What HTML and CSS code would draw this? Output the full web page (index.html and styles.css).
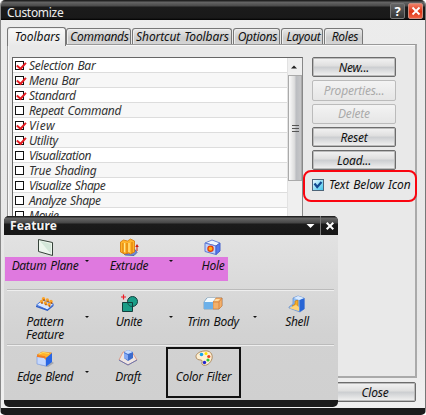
FILE: index.html
```html
<!DOCTYPE html>
<html lang="en">
<head>
<meta charset="utf-8">
<title>Customize</title>
<link rel="stylesheet" href="styles.css">
</head>
<body>
<div class="dialog">
  <header class="titlebar">
    <h1>Customize</h1>
    <span class="winbtn help">?</span>
    <span class="winbtn close"><svg width="10" height="10" viewBox="0 0 10 10"><path d="M1.500 1.500l7 7M8.500 1.500l-7 7" stroke="#fff" stroke-width="1.800"/></svg></span>
  </header>
  <nav class="tabs">
    <span class="tab active">Toolbars</span>
    <span class="tab commands">Commands</span>
    <span class="tab shortcut">Shortcut Toolbars</span>
    <span class="tab options">Options</span>
    <span class="tab layout">Layout</span>
    <span class="tab roles">Roles</span>
  </nav>
  <main class="panel">
    <div class="list">
      <ul>
        <li><i class="box on"></i>Selection Bar</li>
        <li><i class="box on"></i>Menu Bar</li>
        <li><i class="box on"></i>Standard</li>
        <li><i class="box"></i>Repeat Command</li>
        <li class="loose"><i class="box on"></i>View</li>
        <li><i class="box on"></i>Utility</li>
        <li class="tight"><i class="box"></i>Visualization</li>
        <li><i class="box"></i>True Shading</li>
        <li class="tight"><i class="box"></i>Visualize Shape</li>
        <li class="tight"><i class="box"></i>Analyze Shape</li>
        <li><i class="box"></i>Movie</li>
      </ul>
      <div class="scroll">
        <svg class="up" width="14" height="17" viewBox="0 0 14 17"><path d="M3 10.500l3-3l3 3z" fill="#222"/></svg>
        <div class="thumb"><i></i><i></i><i></i></div>
      </div>
    </div>
    <div class="side">
      <button class="btn">New...</button>
      <button class="btn off">Properties...</button>
      <button class="btn off">Delete</button>
      <button class="btn">Reset</button>
      <button class="btn">Load...</button>
      <div class="option">
        <svg width="12" height="12" viewBox="0 0 12 12"><defs><linearGradient id="cb" x2="1" y2="1"><stop stop-color="#f4fbff"/><stop offset="1" stop-color="#36c4ee"/></linearGradient></defs><rect x=".5" y=".5" width="11" height="11" fill="url(#cb)" stroke="#4d6478"/><path d="M2.500 4.500l2.700 3.500l4.300-5" fill="none" stroke="#124a91" stroke-width="2.200"/></svg>
        <span>Text Below Icon</span>
      </div>
    </div>
  </main>
  <footer class="actions"><button class="btn">Close</button></footer>
</div>
<div class="highlight"></div>
<section class="feature">
  <header class="ftitle">
    <h2>Feature</h2>
    <svg class="menu" width="16" height="18" viewBox="0 0 16 18"><path d="M3.500 7h8l-4 4z" fill="#fff"/></svg>
    <span class="fclose"><svg width="10" height="10" viewBox="0 0 10 10"><path d="M1.700 1.700l6.600 6.600M8.300 1.700l-6.600 6.600" stroke="#fff" stroke-width="2"/></svg></span>
  </header>
  <div class="tools">
    <div class="row first">
      <div class="tool arrow">
        <svg width="20" height="20" viewBox="0 0 20 20"><path d="M3.500 2.500l14 3v13l-14-4z" fill="#edf6ed" stroke="#354239"/><path d="M5 4l11 3v10z" fill="#d4e7d9"/></svg>
        <span>Datum Plane</span>
      </div>
      <div class="tool arrow">
        <svg width="20" height="20" viewBox="0 0 20 20"><path d="M2 14l4 4 9 .5 3-3-2-3z" fill="#7188d2" stroke="#314c9b" stroke-width=".7"/><path d="M1.500 5l3-2 4 1 3-2 4 2v11l-4 2-2-1-4 1-4-2z" fill="#ffb32b" stroke="#d87800" stroke-width=".8"/><path d="M4 6v10M8 6v11M13 5v11" stroke="#d97700"/><path d="M5.500 6v9M10 6v9" stroke="#ffe58c" stroke-width="1.300"/><path d="M18 14V9" stroke="#cc1e12"/><path d="M16.200 10L18 7l1.800 3z" fill="#cc1e12"/></svg>
        <span>Extrude</span>
      </div>
      <div class="tool hole">
        <svg width="20" height="20" viewBox="0 0 20 20"><path d="M2 6l7-3 8 3-4 3z" fill="#edf5ff" stroke="#6b85d4"/><path d="M2 6l11 3v8.500l-11-3z" fill="#bed2fc" stroke="#6079d4"/><path d="M13 9l4-3v8l-4 3.500z" fill="#5479ee" stroke="#4561cc"/><circle cx="7.500" cy="11.800" r="2.600" fill="#ffae12" stroke="#e53b0c" stroke-width="1.300"/></svg>
        <span>Hole</span>
      </div>
      <div class="tool"></div>
    </div>
    <div class="row">
      <div class="tool arrow">
        <svg width="20" height="20" viewBox="0 0 20 20"><path d="M1.500 12l6-5 11 4-6 6z" fill="#d7e5ff" stroke="#4778dd"/><path d="M1 12.500l11.500 4 6-5v1.500l-6 5-11.500-4z" fill="#315fc7"/><g fill="#fba428"><circle cx="8.500" cy="5.700" r="1.700"/><circle cx="12.300" cy="7" r="1.700"/><circle cx="16" cy="8.500" r="1.700"/><circle cx="6.500" cy="8.500" r="1.700"/><circle cx="10.300" cy="10" r="1.700"/><circle cx="14" cy="11.500" r="1.700"/></g><g fill="#b95c0d"><circle cx="9" cy="7" r=".9"/><circle cx="13" cy="8.300" r=".9"/><circle cx="16.500" cy="10" r=".9"/><circle cx="7" cy="10" r=".9"/><circle cx="11" cy="11.400" r=".9"/><circle cx="14.500" cy="13" r=".9"/></g></svg>
        <span>Pattern</span>
        <span class="second">Feature</span>
      </div>
      <div class="tool arrow">
        <svg width="20" height="20" viewBox="0 0 20 20"><circle cx="13.500" cy="8.500" r="5" fill="#1a9d87" stroke="#123f3d"/><path d="M3.500 9.500h10v9h-10z" fill="#1a9d87" stroke="#123f3d"/><path d="M8.600 9.500a5 5 0 0 0 5 4" fill="none" stroke="#123f3d" stroke-width=".8"/><path d="M4.500 1.500v5M2 4h5" stroke="#ed1c24" stroke-width="1.200"/></svg>
        <span>Unite</span>
      </div>
      <div class="tool arrow">
        <svg width="20" height="20" viewBox="0 0 20 20"><path d="M1 9l3-4h15v8l-3 3H1z" fill="#a4d6f5" stroke="#5380a6" stroke-width=".6"/><path d="M10 9l3-4h6v8l-3 3h-6z" fill="#f2b06b" stroke="#d6813c" stroke-width=".7"/><path d="M1 9h9v7H1z" fill="#6cb0e9"/><path d="M1.500 9h8l3-4h-8z" fill="#f3fbff"/><path d="M10 9h6l3-4M16 9v7" fill="none" stroke="#d17a35" stroke-width=".7"/><path d="M11 8l2-2h4l-2 2z" fill="#ffdda4"/></svg>
        <span>Trim Body</span>
      </div>
      <div class="tool">
        <svg width="20" height="20" viewBox="0 0 20 20"><path d="M2 14l4-3V5l5-2 6 2v11l-4 3-11-4z" fill="#8ebdf3" stroke="#5d88ce" stroke-width=".7"/><path d="M12.500 7l5-2v11l-5 3z" fill="#2865d5"/><path d="M5 13l3-2V8l3-1v8z" fill="#f5ad25" stroke="#bc791f" stroke-width=".7"/><path d="M2 15l7-3 3 2v4z" fill="#ffd377"/><path d="M7 5l4-2 6 2-5 2z" fill="#d9eaff"/></svg>
        <span>Shell</span>
      </div>
    </div>
    <div class="row">
      <div class="tool arrow">
        <svg width="20" height="20" viewBox="0 0 20 20"><path d="M5 17l8 2 6-4-3-2z" fill="#a5a8b0"/><path d="M2 7l5-3 10 1-5 5z" fill="#ffb12e" stroke="#e08a35" stroke-width=".7"/><path d="M2 8l9 2v8l-9-2z" fill="#c5d8fd" stroke="#7c9ce0" stroke-width=".7"/><path d="M11 10l6-5v9l-6 4.500z" fill="#2866e5"/><path d="M2 7l7 1q2 0 2 4L9 10 2 9z" fill="#f47d20"/><path d="M4 6l4-1.500 6 1" fill="none" stroke="#ffe05e"/></svg>
        <span class="edge">Edge Blend</span>
      </div>
      <div class="tool draft">
        <svg width="20" height="20" viewBox="0 0 20 20"><path d="M1 12l4-8h9l5 8-9 5z" fill="#eee5e2" stroke="#df8a72" stroke-width=".8"/><path d="M1 12l9 5 9-5" fill="none" stroke="#5971b4" stroke-width=".9"/><path d="M6 4l4-2 5 2v6l-5 3-4-3z" fill="#3d6ccc"/><path d="M6 4l4 2 5-2-5-2z" fill="#c8dcff"/><path d="M6 5l4 2v5l-4-2z" fill="#86a9f4"/></svg>
        <span>Draft</span>
      </div>
      <div class="tool selected">
        <svg width="20" height="20" viewBox="0 0 20 20"><path d="M10 3c6-1 9 3 8 7.500s-6 8-9 6.500c-3-2 1-4-2-5-3 0-5-1-5-3.500 0-3 4-5 8-5.500z" fill="#fff0d2" stroke="#a98355" stroke-width=".9"/><circle cx="7.500" cy="6.500" r="1.800" fill="#16a5ed"/><circle cx="12" cy="5.500" r="1.500" fill="#ffe200"/><circle cx="14.800" cy="8.500" r="1.600" fill="#f14119"/><circle cx="14" cy="12" r="1.600" fill="#32c837"/><circle cx="10.500" cy="14.500" r="1.700" fill="#2025cf"/></svg>
        <span>Color Filter</span>
      </div>
      <div class="tool"></div>
    </div>
  </div>
</section>
</body>
</html>
```
FILE: styles.css
```css
* { box-sizing: border-box; }
body { margin: 0; width: 426px; height: 415px; overflow: hidden; background: #fff; font: italic 12px/15px "Noto Sans", sans-serif; letter-spacing: -.3px; word-spacing: 1px; color: #111; }
h1, h2, ul { margin: 0; padding: 0; }
svg { display: block; flex: none; }
.dialog { height: 415px; display: flex; flex-direction: column; background: linear-gradient(#ececec, #e6e6e6 80%, #f1f1f1); border-radius: 5px; overflow: hidden; border-left: 1px solid #888; border-right: 1px solid #777; border-bottom: 7px solid #1b1b1b; }
.titlebar { height: 20px; flex: none; display: flex; align-items: center; padding: 1px 3px 0 6px; background: linear-gradient(#222 0, #222 1px, #666 2px, #494949 6px, #1b1b1b 7px, #191919 18px, #000); margin: 0 -1px; }
h1 { flex: 1; font: 12px/19px "Noto Sans", sans-serif; color: #eee; padding: 4px 0 0 1px; letter-spacing: -.3px; }
.winbtn { width: 15px; height: 16px; border: 1px solid #777; border-radius: 2px; display: flex; align-items: center; justify-content: center; background: linear-gradient(#666, #343434); color: #fff; font: bold 13px/14px "Noto Sans", sans-serif; margin: 0 0 0 3px; }
.winbtn.close { background: linear-gradient(#f18068, #dd3516 55%, #ef6042); border-color: #ce8d80; }
.tabs { height: 25px; flex: none; display: flex; align-items: flex-end; padding-left: 6px; letter-spacing: -.3px; }
.tab { height: 17px; border: 1px solid #777; border-bottom-color: #888; border-radius: 3px 3px 0 0; background: linear-gradient(#e8e8e8, #ccc 60%, #d5d5d5); display: flex; align-items: center; justify-content: center; white-space: nowrap; box-shadow: inset 1px 1px #eee; margin-right: 1px; }
.tab.active { height: 19px; width: 59px; border-bottom: 0; background: linear-gradient(#fafafa, #e9e9e9); margin: 0 0 -1px; z-index: 1; padding: 0 0 1px 2px; letter-spacing: 0; }
.commands { width: 65px; padding-left: 2px; }
.shortcut { width: 100px; letter-spacing: -.1px; padding-left: 1px; }
.options { width: 47px; padding-left: 2px; }
.layout { width: 42px; padding-left: 3px; }
.roles { width: 39px; padding-left: 3px; }
.panel { height: 334px; margin: -1px 8px 0 6px; flex: none; border: 1px solid #999; border-right: 2px solid #aaa; border-bottom: 2px solid #aaa; padding: 12px 0 0 4px; display: flex; gap: 9px; box-shadow: inset 1px 1px #f8f8f8; background: #e9e9e9; }
.list { width: 291px; flex: none; height: 320px; border: 1px solid #666; border-right-color: #888; background: #fff; display: flex; overflow: hidden; }
ul { width: 274px; flex: none; list-style: none; }
li { height: 15px; padding-left: 2px; display: flex; align-items: center; gap: 5px; border-bottom: 1px solid #ddd; color: #333; }
li:nth-child(even) { background: #f7f7f7; }
.loose { letter-spacing: .5px; }
.tight { letter-spacing: -.45px; }
.box { width: 9px; height: 9px; flex: none; border: 1px solid #111; background: #fff; position: relative; }
.box.on::after { content: ""; position: absolute; left: .5px; top: 0; width: 6.500px; height: 4px; border: solid #e51b20; border-width: 0 0 2px 2px; transform: rotate(-48deg); }
.scroll { width: 15px; background: #efefef; display: flex; flex-direction: column; border-left: 1px solid #e2e2e2; }
.thumb { width: 14px; height: 106px; border: 1px solid #aaa; background: linear-gradient(90deg, #fafafa, #ddd 45%, #bbbdc1 60%, #c6c6c8); display: flex; flex-direction: column; gap: 2px; align-items: center; justify-content: center; }
.thumb i { height: 1px; width: 7px; background: #555; }
.side { width: 102px; display: flex; flex-direction: column; gap: 3px; }
.btn { width: 84px; height: 20.3px; flex: none; padding: 0; border: 1px solid #6c6c6c; border-radius: 2px; background: linear-gradient(#f3f3f3, #dedede 45%, #cbcdd0 50%, #eee 94%, #ddd); box-shadow: inset 0 0 0 1px #bbb; color: #111; font: inherit; letter-spacing: -.2px; display: flex; align-items: center; justify-content: center; }
.off { color: #aaa; border-color: #bbb; background: linear-gradient(#f3f3f3, #e6e6e6); box-shadow: none; }
.option { display: flex; align-items: center; gap: 5px; margin-top: 4px; height: 15px; white-space: nowrap; letter-spacing: -.15px; }
.actions { padding: 4px 9px 0; display: flex; justify-content: flex-end; }
.actions .btn { width: 82px; }
.highlight { position: absolute; left: 303px; top: 170px; width: 114px; height: 32px; border: 2px solid #fa0510; border-radius: 8px; }
.feature { position: absolute; left: 4px; top: 216px; width: 334px; height: 191px; display: flex; flex-direction: column; border-radius: 5px; overflow: hidden; background: #1b1b1b; }
.ftitle { height: 19px; flex: none; display: flex; align-items: center; background: linear-gradient(#222 0, #222 1px, #686868 2px, #454545 7px, #1b1b1b 8px, #161616); padding-left: 6px; }
h2 { flex: 1; color: #f4f4f4; font: bold 12px/18px "Noto Sans", sans-serif; letter-spacing: .1px; }
.fclose { width: 18px; height: 19px; border-left: 1px solid #777; display: flex; align-items: center; justify-content: center; margin-left: 1px; }
.tools { height: 165px; background: linear-gradient(#e2e2e2, #d2d2d2 60%, #d0d0d0); display: flex; flex-direction: column; padding: 0 4px 0 3px; }
.row { display: grid; grid-template-columns: 80px 84px 84px 80px; height: 56px; padding-top: 3px; border-top: 1px solid #bbb; box-shadow: inset 0 1px #eee; }
.row.first { height: 54px; border: 0; margin-left: -2px; padding: 2px 0 0 2px; box-shadow: none; background: linear-gradient(#df79df, #df79df) 0 22px / 223px 24px no-repeat; }
.tool { position: relative; display: flex; flex-direction: column; align-items: center; line-height: 13px; text-align: center; white-space: nowrap; }
.tool:first-child { padding-right: 4px; }
.tool:last-child { padding-left: 4px; }
.tool > span { margin-top: 2px; }
.tool > .second { margin-top: 0; }
.draft { padding-right: 2px; }
.edge { letter-spacing: -.45px; }
.arrow::after { content: ""; position: absolute; right: -2px; top: 23px; border: 2px solid transparent; border-top: 2px solid #111; border-bottom: 0; }
.selected { outline: 2px solid #111; outline-offset: -2px; width: 75px; height: 51px; margin: -1px 0 0 -5px; padding-top: 1px; }
```
